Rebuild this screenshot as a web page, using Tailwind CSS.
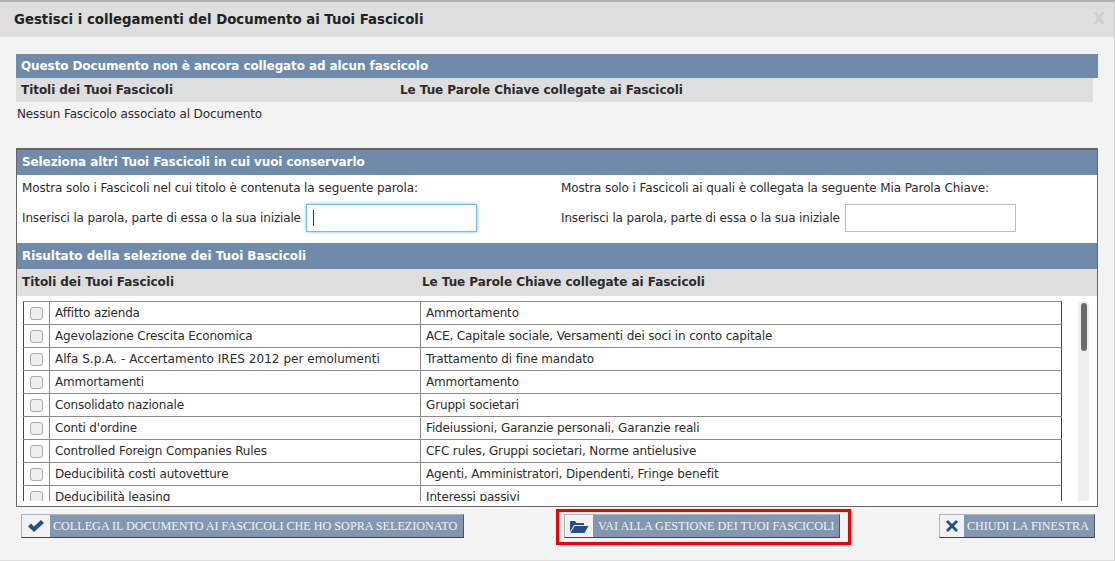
<!DOCTYPE html>
<html lang="it">
<head>
    <meta charset="UTF-8">
    <title>Gestisci i collegamenti</title>
    <script src="https://cdn.jsdelivr.net/npm/@tailwindcss/browser@4"></script>
</head>
<body class="bg-[#f3f3f3] font-['DejaVu_Sans',sans-serif] text-[12px] tracking-[-.13px] text-[#2b2b2b] overflow-hidden">
    <div class="w-[1115px] h-[561px] flex flex-col border-t-2 border-r border-b border-[#b0b0b0] border-r-[#cfcfcf] border-b-[#dddddd] overflow-hidden">

        <!-- Title bar -->
        <div class="h-[35px] shrink-0 bg-[#dedede] flex items-center justify-between pl-[14px] pr-[9px]">
            <h1 class="text-[13.3px] tracking-normal font-bold text-[#222]">Gestisci i collegamenti del Documento ai Tuoi Fascicoli</h1>
            <span class="text-[15px] font-bold text-[#cfcfcf]">X</span>
        </div>

        <!-- Linked section -->
        <div class="mt-[17px] ml-[16px] w-[1082px] h-[24px] shrink-0 bg-[#6f8bab] text-white tracking-[-.1px] font-bold flex items-center pl-[5px]">Questo Documento non è ancora collegato ad alcun fascicolo</div>
        <div class="ml-[16px] w-[1077px] h-[24px] shrink-0 bg-[#dedede] tracking-[-.05px] font-bold flex items-center pl-[5px]">
            <span class="w-[379px]">Titoli dei Tuoi Fascicoli</span>
            <span>Le Tue Parole Chiave collegate ai Fascicoli</span>
        </div>
        <p class="ml-[17px] mt-[5px] h-[41px] shrink-0 leading-[15px]">Nessun Fascicolo associato al Documento</p>

        <!-- Selection box -->
        <div class="ml-[16px] w-[1082px] h-[359px] shrink-0 border border-[#666] border-t-2 bg-white flex flex-col overflow-hidden">
            <div class="h-[25px] shrink-0 bg-[#6f8bab] text-white tracking-[-.1px] font-bold flex items-center pl-[5px] pb-[2px]">Seleziona altri Tuoi Fascicoli in cui vuoi conservarlo</div>
            <div class="h-[68px] shrink-0 grid grid-cols-[539px_1fr] pl-[5px] pt-[6px]">
                <div>
                    <p class="leading-[15px] tracking-[-.11px]">Mostra solo i Fascicoli nel cui titolo è contenuta la seguente parola:</p>
                    <div class="flex items-center mt-[8px]">
                        <span class="tracking-[-.16px]">Inserisci la parola, parte di essa o la sua iniziale</span>
                        <div class="ml-[5px] w-[171px] h-[28px] bg-white border border-[#7ab9ee] shadow-[0_0_3px_#7ab9ee] flex items-center pl-[6px]"><span class="w-px h-[16px] bg-[#333]"></span></div>
                    </div>
                </div>
                <div>
                    <p class="leading-[15px] tracking-[-.11px]">Mostra solo i Fascicoli ai quali è collegata la seguente Mia Parola Chiave:</p>
                    <div class="flex items-center mt-[8px]">
                        <span class="tracking-[-.16px]">Inserisci la parola, parte di essa o la sua iniziale</span>
                        <div class="ml-[5px] w-[171px] h-[28px] bg-white border border-[#bdbdbd]"></div>
                    </div>
                </div>
            </div>

            <div class="h-[26px] shrink-0 bg-[#6f8bab] text-white tracking-[-.05px] font-bold flex items-center pl-[5px]">Risultato della selezione dei Tuoi Bascicoli</div>
            <div class="h-[27px] shrink-0 bg-[#dedede] tracking-[-.05px] font-bold flex items-center pl-[5px] pb-[2px]">
                <span class="w-[400px]">Titoli dei Tuoi Fascicoli</span>
                <span>Le Tue Parole Chiave collegate ai Fascicoli</span>
            </div>

            <!-- Results list -->
            <div class="relative flex-1 min-h-0 pl-[6px] pt-[5px] pb-[5px]">
                <div class="h-full overflow-hidden">
                    <table id="results" class="w-[1039px] table-fixed border-collapse border border-[#444]">
                        <colgroup><col class="w-[26px]"><col class="w-[371px]"><col></colgroup>
                        <tbody id="rows"></tbody>
                    </table>
                </div>
                <div class="absolute left-[1061px] top-[5px] bottom-[5px] w-[11px] bg-[#eeeeee] rounded-t-[5px]">
                    <div class="mx-auto mt-[2px] w-[6px] h-[48px] rounded-[3px] bg-[#6b6b6b]"></div>
                </div>
            </div>
        </div>

        <!-- Buttons -->
        <div class="relative ml-[21px] mt-[7px] w-[1074px] flex justify-between items-start font-['Liberation_Serif',serif] text-[12.15px] tracking-normal text-[#f2f2f2]">
            <button class="flex h-[24px] bg-[#8298b1] border border-[#a9b5c3] border-r-[#555] border-b-[#444]">
                <span class="w-[28px] h-full bg-[#f0f2f5] flex items-center justify-center">
                    <svg width="18" height="14" viewBox="0 0 18 14"><path d="M1 7.500 L4 4.500 L7 7.500 L14 1 L17 4 L7 13 Z" fill="#264f86"/></svg>
                </span>
                <span class="pl-[3px] pr-[6px] leading-[22px] whitespace-nowrap">COLLEGA IL DOCUMENTO AI FASCICOLI CHE HO SOPRA SELEZIONATO</span>
            </button>
            <div class="absolute left-[535px] top-[-5px] w-[295px] h-[36px] border-[3px] border-[#f00000]"></div>
            <button class="absolute left-[543px] top-0 flex h-[24px] bg-[#8298b1] border border-[#a9b5c3] border-r-[#555] border-b-[#444]">
                <span class="w-[28px] h-full bg-[#f0f2f5] flex items-center justify-center">
                    <svg width="20" height="15" viewBox="0 0 20 15"><path d="M1 13 V2 H6 L7.500 4 H15 V6 H5 Z" fill="#264f86"/><path d="M1.500 14 L5.500 7 H19.500 L15.500 14 Z" fill="#264f86"/></svg>
                </span>
                <span class="pl-[5px] pr-[5px] leading-[22px] whitespace-nowrap">VAI ALLA GESTIONE DEI TUOI FASCICOLI</span>
            </button>
            <button class="flex h-[24px] bg-[#8298b1] border border-[#a9b5c3] border-r-[#555] border-b-[#444]">
                <span class="w-[24px] h-full bg-[#f0f2f5] flex items-center justify-center">
                    <svg width="14" height="14" viewBox="0 0 14 14"><path d="M3 1 L7 5 L11 1 L13 3 L9 7 L13 11 L11 13 L7 9 L3 13 L1 11 L5 7 L1 3 Z" fill="#264f86"/></svg>
                </span>
                <span class="pl-[3px] pr-[5px] leading-[22px] whitespace-nowrap">CHIUDI LA FINESTRA</span>
            </button>
        </div>
    </div>

    <script>
        const rows = [
            ['Affitto azienda', 'Ammortamento'],
            ['Agevolazione Crescita Economica', 'ACE, Capitale sociale, Versamenti dei soci in conto capitale'],
            ['Alfa S.p.A. - Accertamento IRES 2012 per emolumenti', 'Trattamento di fine mandato', 'tracking-[.04px]'],
            ['Ammortamenti', 'Ammortamento'],
            ['Consolidato nazionale', 'Gruppi societari'],
            ["Conti d'ordine", 'Fideiussioni, Garanzie personali, Garanzie reali'],
            ['Controlled Foreign Companies Rules', 'CFC rules, Gruppi societari, Norme antielusive'],
            ['Deducibilità costi autovetture', 'Agenti, Amministratori, Dipendenti, Fringe benefit'],
            ['Deducibilità leasing', 'Interessi passivi']
        ];
        document.getElementById('rows').innerHTML = rows.map(r => `
            <tr class="h-[23px]">
                <td class="border border-[#8a8a8a] border-l-[#444] p-0"><span class="block mx-auto w-[13px] h-[13px] rounded-[3px] bg-[#eeeeee] border border-[#ababab]"></span></td>
                <td class="border border-[#8a8a8a] pl-[5px] p-0 whitespace-nowrap tracking-[-.15px] ${r[2] || ''}">${r[0]}</td>
                <td class="border border-[#8a8a8a] border-r-[#444] pl-[5px] p-0 whitespace-nowrap tracking-[-.15px]">${r[1]}</td>
            </tr>`).join('');
    </script>
</body>
</html>
